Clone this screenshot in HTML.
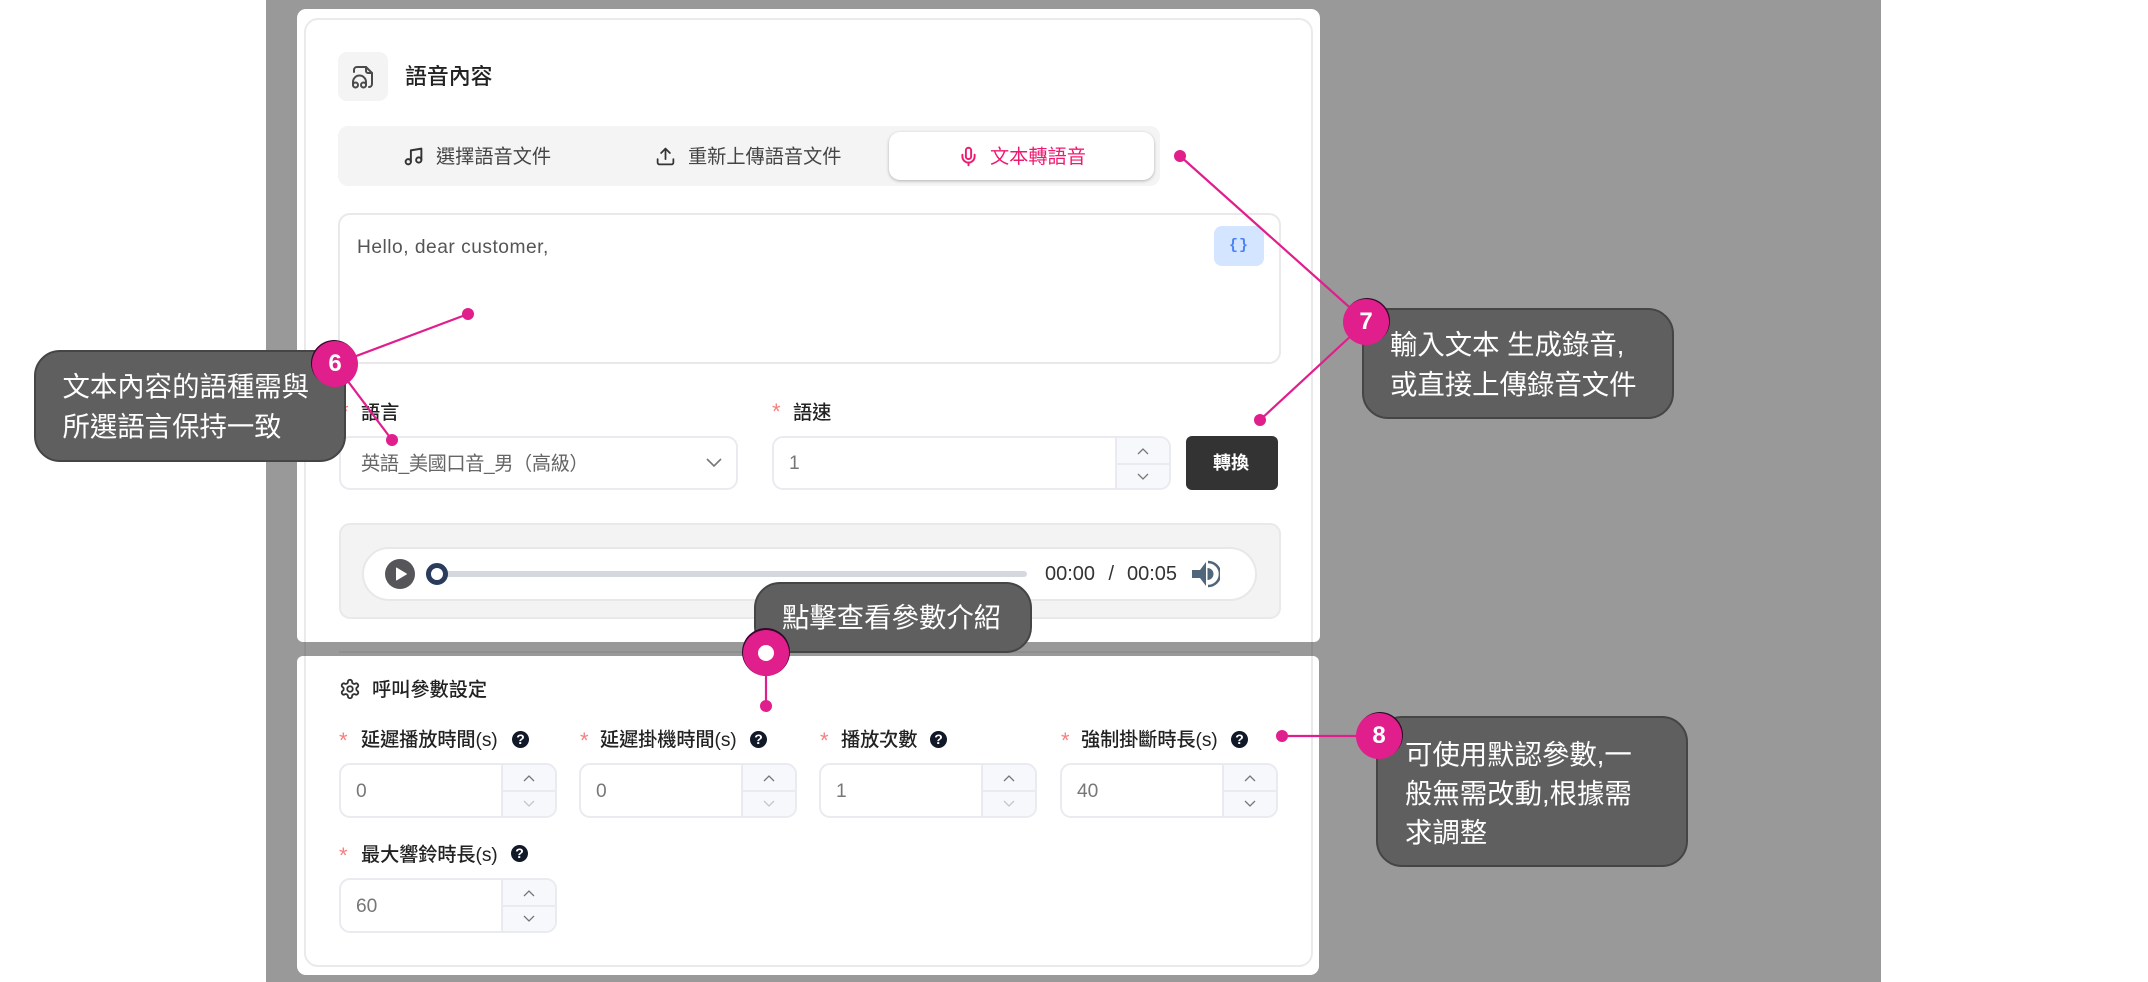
<!DOCTYPE html>
<html lang="zh-Hant"><head><meta charset="utf-8"><title>語音內容</title>
<style>
html,body{margin:0;padding:0;background:#fff}
body{width:2148px;height:982px;position:relative;overflow:hidden;font-family:"Liberation Sans","Noto Sans CJK TC",sans-serif;color:#333}
div{box-sizing:border-box}
.a{position:absolute}
.t{position:absolute;white-space:nowrap;line-height:30px;height:30px;font-size:19.2px}
.lb{font-weight:500;color:#222;letter-spacing:-.1px}
.st{position:absolute;white-space:nowrap;color:#f77f7f;font-size:22px;line-height:20px;height:20px}
.help{position:absolute;width:17px;height:17px;border-radius:50%;background:#111827;color:#fff;font-size:14px;font-weight:700;line-height:17px;text-align:center}
.num{position:absolute;width:218px;height:55px;background:#fff;border:2px solid #e9ebf0;border-radius:11px;overflow:hidden}
.num .v{position:absolute;left:15px;top:11.5px;line-height:30px;font-size:19.2px;color:#777}
.num .s{position:absolute;right:0;top:0;bottom:0;width:54px;background:#f7f8fb;border-left:2px solid #e9ebf0}
.num .m{position:absolute;left:0;right:0;top:25px;height:2px;background:#e9ebf0}
.num svg{position:absolute;left:20px;width:12px;height:7px}
.num .u{top:10px}.num .d{top:35px}
.co{position:absolute;background:#5f5f5f;border:2px solid #454545;border-radius:26px}
.ct{position:absolute;white-space:nowrap;color:#fff;font-size:27.4px;line-height:40px;height:40px}
.bd{position:absolute;width:46px;height:46px;border-radius:50%;background:#e01e8c;color:#fff;font-weight:700;font-size:24px;line-height:46px;text-align:center;font-family:"Liberation Sans",sans-serif}
</style></head><body>

<div class="a" style="left:266px;top:0;width:1615px;height:982px;background:#999"></div>
<div class="a" style="left:304px;top:640px;width:2px;height:18px;background:#8f8f8f"></div>
<div class="a" style="left:1311px;top:640px;width:2px;height:18px;background:#8f8f8f"></div>
<div class="a" style="left:339px;top:651px;width:941px;height:2px;background:#8f8f8f"></div>

<!-- cards -->
<div class="a" style="left:297px;top:9px;width:1023px;height:633px;background:#fff;border-radius:9px 9px 6px 6px;overflow:hidden">
  <div class="a" style="left:7px;top:9px;width:1009px;height:660px;border:2px solid #e9eaec;border-radius:14px"></div>
</div>
<div class="a" style="left:297px;top:656px;width:1022px;height:319px;background:#fff;border-radius:6px 6px 9px 9px;overflow:hidden">
  <div class="a" style="left:7px;top:-40px;width:1009px;height:351px;border:2px solid #e9eaec;border-radius:14px"></div>
</div>

<!-- header -->
<div class="a" style="left:338px;top:52px;width:50px;height:49px;background:#f4f4f4;border-radius:9px"></div>
<svg class="a" style="left:352px;top:66px" width="22" height="23" viewBox="0 0 22 23" fill="none" stroke="#4a4a4a" stroke-width="2" stroke-linecap="round" stroke-linejoin="round"><path d="M2 6V4a3 3 0 0 1 3-3h9l6 6v11a3 3 0 0 1-3 3"/><path d="M14 1v4a2 2 0 0 0 2 2h4"/><path d="M1 19v-3a6.500 6.500 0 0 1 13 0v3"/><circle cx="3.500" cy="19" r="2.500"/><circle cx="11.500" cy="19" r="2.500"/></svg>
<div class="t" style="left:405px;top:62px;font-size:21.9px;font-weight:500;color:#222">語音內容</div>

<!-- tabs -->
<div class="a" style="left:338px;top:126px;width:822px;height:60px;background:#f4f4f4;border-radius:10px"></div>
<div class="a" style="left:889px;top:132px;width:265px;height:48px;background:#fff;border-radius:11px;box-shadow:0 1px 3px rgba(0,0,0,.28)"></div>
<svg class="a" style="left:403px;top:146px" width="21" height="21" viewBox="0 0 24 24" fill="none" stroke="#333" stroke-width="2.200" stroke-linecap="round" stroke-linejoin="round"><path d="M9 18V5l12-2v13"/><circle cx="6" cy="18" r="3"/><circle cx="18" cy="16" r="3"/></svg>
<div class="t" style="left:436px;top:143px;color:#444">選擇語音文件</div>
<svg class="a" style="left:655px;top:146px" width="21" height="21" viewBox="0 0 24 24" fill="none" stroke="#333" stroke-width="2" stroke-linecap="round" stroke-linejoin="round"><path d="M21 15v4a2 2 0 0 1-2 2H5a2 2 0 0 1-2-2v-4"/><path d="M17 8l-5-5-5 5"/><path d="M12 3v12"/></svg>
<div class="t" style="left:688px;top:143px;color:#444">重新上傳語音文件</div>
<svg class="a" style="left:958px;top:146px" width="21" height="21" viewBox="0 0 24 24" fill="none" stroke="#f0196f" stroke-width="2.200" stroke-linecap="round" stroke-linejoin="round"><path d="M12 2a3 3 0 0 0-3 3v7a3 3 0 0 0 6 0V5a3 3 0 0 0-3-3Z"/><path d="M19 10v2a7 7 0 0 1-14 0v-2"/><path d="M12 19v3"/></svg>
<div class="t" style="left:990px;top:143px;color:#f0196f">文本轉語音</div>

<!-- textarea -->
<div class="a" style="left:338px;top:213px;width:943px;height:151px;border:2px solid #e9e9ec;border-radius:12px;background:#fff"></div>
<div class="t" style="left:357px;top:233px;color:#555;font-size:19.2px;letter-spacing:.5px">Hello, dear customer,</div>
<div class="a" style="left:1214px;top:226px;width:50px;height:40px;background:#d3e5ff;border-radius:8px;color:#4a82f5;font:700 15px/40px 'Liberation Mono',monospace;text-align:center;letter-spacing:1px">{}</div>

<!-- language & speed -->
<div class="st" style="left:340px;top:402px">*</div>
<div class="t lb" style="left:361px;top:399px">語言</div>
<div class="st" style="left:772px;top:402px">*</div>
<div class="t lb" style="left:793px;top:399px">語速</div>
<div class="a" style="left:339px;top:436px;width:399px;height:54px;border:2px solid #e9ebf0;border-radius:11px;background:#fff"></div>
<div class="t" style="left:361px;top:450px;color:#666;font-size:19.2px;letter-spacing:-.4px">英語_美國口音_男（高級）</div>
<svg class="a" style="left:706px;top:458px" width="16" height="10" viewBox="0 0 16 10" fill="none" stroke="#777" stroke-width="1.600"><path d="M1 1l7 7 7-7"/></svg>

<div class="num" style="left:772px;top:436px;width:399px;height:54px"><div class="v" style="top:11px">1</div><div class="s"><div class="m"></div><svg class="u" viewBox="0 0 12 7" fill="none" stroke="#777" stroke-width="1.300"><path d="M1 6l5-5 5 5"/></svg><svg class="d" viewBox="0 0 12 7" fill="none" stroke="#777" stroke-width="1.300"><path d="M1 1l5 5 5-5"/></svg></div></div>
<div class="a" style="left:1186px;top:436px;width:92px;height:54px;background:#333;border-radius:6px;color:#fff;text-align:center;font-size:18px;font-weight:700;line-height:54px;padding-right:2px">轉換</div>

<!-- audio -->
<div class="a" style="left:339px;top:523px;width:942px;height:96px;background:#f3f3f3;border:2px solid #e9e9e9;border-radius:11px"></div>
<div class="a" style="left:362px;top:547px;width:895px;height:54px;background:#fff;border:2px solid #e8e8e8;border-radius:27px"></div>
<div class="a" style="left:385px;top:559px;width:30px;height:30px;background:#55555a;border-radius:50%"></div>
<svg class="a" style="left:385px;top:559px" width="30" height="30" viewBox="0 0 30 30"><path d="M11.500 9v12l10-6z" fill="#fff" stroke="#fff" stroke-linejoin="round"/></svg>
<div class="a" style="left:440px;top:571px;width:587px;height:6px;background:#d5d8de;border-radius:3px"></div>
<div class="a" style="left:426px;top:563px;width:22px;height:22px;border:5px solid #2b3b5c;border-radius:50%;background:#fff"></div>
<div class="t" style="left:1045px;top:559px;font-size:20px;color:#333">00:00</div>
<div class="t" style="left:1108.500px;top:559px;font-size:20px;color:#333">/</div>
<div class="t" style="left:1127px;top:559px;font-size:20px;color:#333">00:05</div>
<svg class="a" style="left:1192px;top:560px" width="28" height="28" viewBox="0 0 28 28"><path d="M0 10h8l6-8v24l-6-8H0z" fill="#50667b"/><path d="M15.500 8a6 6 0 0 1 0 12z" fill="#50667b"/><path d="M16 2a12 12 0 0 1 0 24" fill="none" stroke="#50667b" stroke-width="2.600"/></svg>

<!-- params -->
<svg class="a" style="left:339px;top:678px" width="22" height="22" viewBox="0 0 24 24" fill="none" stroke="#333" stroke-width="2" stroke-linecap="round" stroke-linejoin="round"><path d="M12.220 2h-.44a2 2 0 0 0-2 2v.18a2 2 0 0 1-1 1.730l-.43.25a2 2 0 0 1-2 0l-.15-.08a2 2 0 0 0-2.730.73l-.22.38a2 2 0 0 0 .73 2.730l.15.1a2 2 0 0 1 1 1.720v.51a2 2 0 0 1-1 1.740l-.15.09a2 2 0 0 0-.73 2.730l.22.38a2 2 0 0 0 2.730.73l.15-.08a2 2 0 0 1 2 0l.43.25a2 2 0 0 1 1 1.730V20a2 2 0 0 0 2 2h.44a2 2 0 0 0 2-2v-.18a2 2 0 0 1 1-1.730l.43-.25a2 2 0 0 1 2 0l.15.08a2 2 0 0 0 2.730-.73l.22-.39a2 2 0 0 0-.73-2.730l-.15-.08a2 2 0 0 1-1-1.740v-.5a2 2 0 0 1 1-1.740l.15-.09a2 2 0 0 0 .73-2.730l-.22-.38a2 2 0 0 0-2.730-.73l-.15.08a2 2 0 0 1-2 0l-.43-.25a2 2 0 0 1-1-1.730V4a2 2 0 0 0-2-2z"/><circle cx="12" cy="12" r="3"/></svg>
<div class="t" style="left:372px;top:676px;font-weight:500;color:#222">呼叫參數設定</div>

<div class="st" style="left:339px;top:731px">*</div><div class="t lb" style="left:361px;top:726px">延遲播放時間(s)</div><div class="help" style="left:512px;top:731px">?</div>
<div class="st" style="left:580px;top:731px">*</div><div class="t lb" style="left:600px;top:726px">延遲掛機時間(s)</div><div class="help" style="left:750px;top:731px">?</div>
<div class="st" style="left:820px;top:731px">*</div><div class="t lb" style="left:841px;top:726px">播放次數</div><div class="help" style="left:930px;top:731px">?</div>
<div class="st" style="left:1061px;top:731px">*</div><div class="t lb" style="left:1081px;top:726px">強制掛斷時長(s)</div><div class="help" style="left:1231px;top:731px">?</div>

<div class="num" style="left:339px;top:763px"><div class="v">0</div><div class="s"><div class="m"></div><svg class="u" viewBox="0 0 12 7" fill="none" stroke="#777" stroke-width="1.300"><path d="M1 6l5-5 5 5"/></svg><svg class="d" viewBox="0 0 12 7" fill="none" stroke="#c4c6cc" stroke-width="1.300"><path d="M1 1l5 5 5-5"/></svg></div></div>
<div class="num" style="left:579px;top:763px"><div class="v">0</div><div class="s"><div class="m"></div><svg class="u" viewBox="0 0 12 7" fill="none" stroke="#777" stroke-width="1.300"><path d="M1 6l5-5 5 5"/></svg><svg class="d" viewBox="0 0 12 7" fill="none" stroke="#c4c6cc" stroke-width="1.300"><path d="M1 1l5 5 5-5"/></svg></div></div>
<div class="num" style="left:819px;top:763px"><div class="v">1</div><div class="s"><div class="m"></div><svg class="u" viewBox="0 0 12 7" fill="none" stroke="#777" stroke-width="1.300"><path d="M1 6l5-5 5 5"/></svg><svg class="d" viewBox="0 0 12 7" fill="none" stroke="#c4c6cc" stroke-width="1.300"><path d="M1 1l5 5 5-5"/></svg></div></div>
<div class="num" style="left:1060px;top:763px"><div class="v">40</div><div class="s"><div class="m"></div><svg class="u" viewBox="0 0 12 7" fill="none" stroke="#777" stroke-width="1.300"><path d="M1 6l5-5 5 5"/></svg><svg class="d" viewBox="0 0 12 7" fill="none" stroke="#777" stroke-width="1.300"><path d="M1 1l5 5 5-5"/></svg></div></div>

<div class="st" style="left:339px;top:846px">*</div><div class="t lb" style="left:361px;top:841px">最大響鈴時長(s)</div><div class="help" style="left:511px;top:845px">?</div>
<div class="num" style="left:339px;top:878px"><div class="v">60</div><div class="s"><div class="m"></div><svg class="u" viewBox="0 0 12 7" fill="none" stroke="#777" stroke-width="1.300"><path d="M1 6l5-5 5 5"/></svg><svg class="d" viewBox="0 0 12 7" fill="none" stroke="#777" stroke-width="1.300"><path d="M1 1l5 5 5-5"/></svg></div></div>

<!-- callouts -->
<div class="co" style="left:34px;top:350px;width:312px;height:112px"></div>
<div class="ct" style="left:62.500px;top:367px">文本內容的語種需與</div>
<div class="ct" style="left:62.500px;top:407px">所選語言保持一致</div>

<div class="co" style="left:1362px;top:308px;width:312px;height:111px"></div>
<div class="ct" style="left:1390px;top:325px">輸入文本 生成錄音,</div>
<div class="ct" style="left:1390px;top:365px">或直接上傳錄音文件</div>

<div class="co" style="left:754px;top:582px;width:278px;height:71px"></div>
<div class="ct" style="left:782px;top:598px">點擊查看參數介紹</div>

<div class="co" style="left:1376px;top:716px;width:312px;height:151px"></div>
<div class="ct" style="left:1405px;top:735px">可使用默認參數,一</div>
<div class="ct" style="left:1405px;top:774px">般無需改動,根據需</div>
<div class="ct" style="left:1405px;top:813px">求調整</div>

<!-- pointer lines -->
<svg class="a" style="left:0;top:0" width="2148" height="982" viewBox="0 0 2148 982" fill="#e01e8c" stroke="none">
  <g stroke="#e01e8c" stroke-width="2.200" fill="none">
    <path d="M335 364L468 314"/><path d="M335 364L392 440"/>
    <path d="M1366 322L1180 156"/><path d="M1366 322L1260 420"/>
    <path d="M766 652V706"/><path d="M1380 736H1282"/>
  </g>
  <circle cx="468" cy="314" r="6"/><circle cx="392" cy="440" r="6"/>
  <circle cx="1180" cy="156" r="6"/><circle cx="1260" cy="420" r="6"/>
  <circle cx="766" cy="706" r="6"/><circle cx="1282" cy="736" r="6"/>
</svg>

<!-- badges -->
<div class="bd" style="left:312px;top:341px;box-shadow:-1px -1px 0 0 #35082a">6</div>
<div class="bd" style="left:1343px;top:299px;box-shadow:1px -1px 0 0 #35082a">7</div>
<div class="bd" style="left:743px;top:630px;box-shadow:0 -1px 0 1px #35082a"><div class="a" style="left:15px;top:15px;width:16px;height:16px;border-radius:50%;background:#fff"></div></div>
<div class="bd" style="left:1356px;top:713px;box-shadow:1px -1px 0 0 #35082a">8</div>
</body></html>
